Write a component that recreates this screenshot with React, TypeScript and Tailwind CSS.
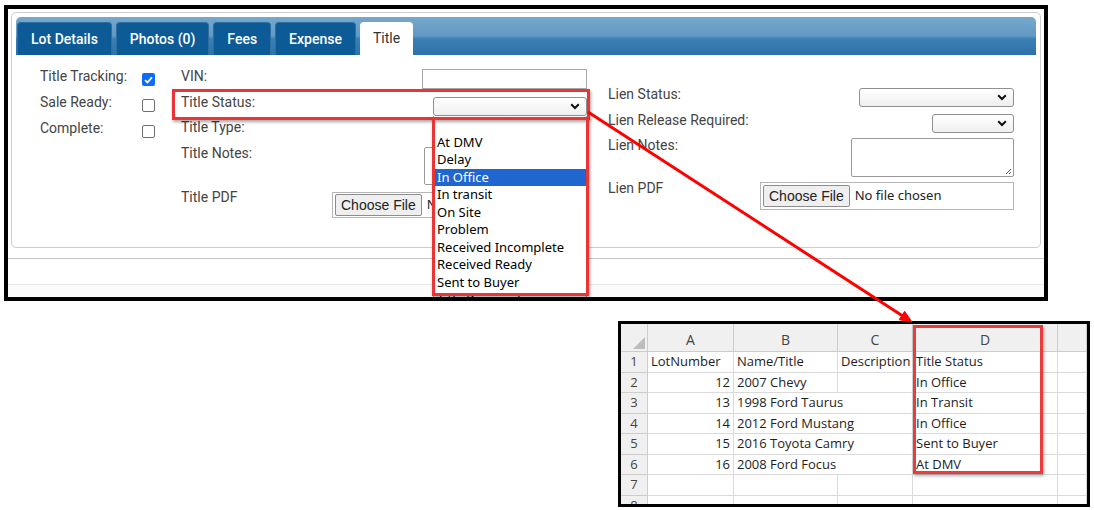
import React from "react";

const Chevron = () => (
  <svg width="10" height="7" viewBox="0 0 10 7" className="shrink-0">
    <path d="M1.2 1.2 5 5 8.8 1.2" fill="none" stroke="#111" strokeWidth="2" />
  </svg>
);

const Select = ({ cls }: { cls: string }) => (
  <div
    className={`${cls} h-[19px] flex items-center justify-end pr-[6px] border border-[#8f8f8f] rounded-[3px] bg-[linear-gradient(to_bottom,#ffffff,#efefef)]`}
  >
    <Chevron />
  </div>
);

const Check = ({ on }: { on?: boolean }) =>
  on ? (
    <div className="w-[13px] h-[13px] rounded-[2px] bg-[#0b6cf5] flex items-center justify-center">
      <svg width="9" height="8" viewBox="0 0 9 8">
        <path d="M1 4.2 3.4 6.5 8 1.3" fill="none" stroke="#fff" strokeWidth="1.8" />
      </svg>
    </div>
  ) : (
    <div className="w-[13px] h-[13px] rounded-[2px] border border-[#6f6f6f] bg-white" />
  );

const FileInput = ({ cls }: { cls: string }) => (
  <div
    className={`${cls} border border-[#b5b5b5] flex items-center px-[2px] gap-[5px] bg-white overflow-hidden whitespace-nowrap`}
  >
    <div className="h-[22px] px-[5px] flex items-center border border-[#8d8d8d] rounded-[2px] bg-[#efefef] font-['Liberation_Sans',Arial,sans-serif] text-[14px] text-[#222]">
      Choose File
    </div>
    <span className="font-['Noto_Sans',sans-serif] text-[13px] text-[#222]">No file chosen</span>
  </div>
);

const TextArea = ({ cls }: { cls: string }) => (
  <div className={`${cls} relative border border-[#9a9a9a] rounded-[2px] bg-white`}>
    <svg className="absolute right-[1px] bottom-[1px]" width="8" height="8" viewBox="0 0 8 8">
      <path d="M7 2 2 7 M7 5 5 7" stroke="#555" strokeWidth="1" />
    </svg>
  </div>
);

const Label = ({ text, lh }: { text: string; lh: string }) => (
  <div className={`text-[14px] text-[#444] whitespace-nowrap ${lh}`}>{text}</div>
);

const tabs = ["Lot Details", "Photos (0)", "Fees", "Expense"];

const options = [
  "",
  "At DMV",
  "Delay",
  "In Office",
  "In transit",
  "On Site",
  "Problem",
  "Received Incomplete",
  "Received Ready",
  "Sent to Buyer",
  "Title Received",
];

const rows: { n: string; a: string; b: string; c: string; d: string; span?: boolean }[] = [
  { n: "1", a: "LotNumber", b: "Name/Title", c: "Description", d: "Title Status" },
  { n: "2", a: "12", b: "2007 Chevy", c: "", d: "In Office" },
  { n: "3", a: "13", b: "1998 Ford Taurus", c: "", d: "In Transit", span: true },
  { n: "4", a: "14", b: "2012 Ford Mustang", c: "", d: "In Office", span: true },
  { n: "5", a: "15", b: "2016 Toyota Camry", c: "", d: "Sent to Buyer", span: true },
  { n: "6", a: "16", b: "2008 Ford Focus", c: "", d: "At DMV", span: true },
  { n: "7", a: "", b: "", c: "", d: "" },
  { n: "8", a: "", b: "", c: "", d: "" },
];

const cell = "border-r border-b border-[#dadada] px-[3px] flex items-center whitespace-nowrap text-[#1d1d1d]";
const head = "bg-[#f0f0f0] border-r border-b border-[#cdcdcd] flex items-center justify-center text-[#444]";

export default function App() {
  return (
    <div className="relative w-[1094px] h-[510px] bg-white overflow-hidden font-['Roboto',sans-serif]">
      {/* top screenshot */}
      <div className="ml-[4px] mt-[5px] w-[1044px] h-[296px] border-4 border-black bg-white flex flex-col">
        <div className="ml-[3px] mt-[3px] w-[1030px] h-[236px] shrink-0 border border-[#cdcdcd] rounded-[5px] pt-[4px] pl-[4px]">
          <div className="w-[1020px] h-[38px] rounded-t-[5px] bg-[linear-gradient(to_bottom,#77a8cc_0%,#6199c3_50%,#3b80b5_57%,#2c71a9_100%)] flex items-end gap-[4px] pl-[1px]">
            {tabs.map((t) => (
              <div
                key={t}
                className="h-[33px] px-[13px] flex items-center rounded-t-[4px] bg-[#0c5a96] border border-b-0 border-[#2f6f9f] text-white text-[14px] font-medium"
              >
                {t}
              </div>
            ))}
            <div className="h-[33px] px-[13px] flex items-center rounded-t-[4px] bg-white text-[#333] text-[14px]">
              Title
            </div>
          </div>

          <div className="flex pl-[24px]">
            <div className="w-[141px] pt-[8px] flex flex-col">
              {[
                ["Title Tracking:", true],
                ["Sale Ready:", false],
                ["Complete:", false],
              ].map(([t, on]) => (
                <div key={t as string} className="h-[26px] flex items-start">
                  <div className="w-[102px]">
                    <Label text={t as string} lh="leading-[26px]" />
                  </div>
                  <div className="mt-[10px]">
                    <Check on={on as boolean} />
                  </div>
                </div>
              ))}
            </div>

            <div className="w-[406px] pt-[8px] flex flex-col">
              <div className="h-[26px] flex justify-between items-start">
                <Label text="VIN:" lh="leading-[26px]" />
                <div className="mt-[6px] w-[165px] h-[20px] border border-[#a8a8a8] bg-white" />
              </div>
              <div className="h-[26px] flex justify-between items-start">
                <Label text="Title Status:" lh="leading-[26px]" />
                <div className="mt-[8px]">
                  <Select cls="w-[154px]" />
                </div>
              </div>
              <div className="h-[25px] flex items-start">
                <Label text="Title Type:" lh="leading-[25px]" />
              </div>
              <div className="h-[45px] flex justify-between items-start">
                <Label text="Title Notes:" lh="leading-[26px]" />
                <div className="mt-[7px]">
                  <TextArea cls="w-[163px] h-[38px]" />
                </div>
              </div>
              <div className="flex justify-between items-start">
                <Label text="Title PDF" lh="leading-[24px]" />
                <div className="mt-[7px]">
                  <FileInput cls="w-[255px] h-[26px]" />
                </div>
              </div>
            </div>

            <div className="w-[406px] ml-[21px] pt-[26px] flex flex-col">
              <div className="h-[26px] flex justify-between items-start">
                <Label text="Lien Status:" lh="leading-[26px]" />
                <div className="mt-[7px]">
                  <Select cls="w-[155px]" />
                </div>
              </div>
              <div className="h-[26px] flex justify-between items-start">
                <Label text="Lien Release Required:" lh="leading-[26px]" />
                <div className="mt-[7px]">
                  <Select cls="w-[82px]" />
                </div>
              </div>
              <div className="h-[44px] flex justify-between items-start">
                <Label text="Lien Notes:" lh="leading-[24px]" />
                <div className="mt-[5px]">
                  <TextArea cls="w-[163px] h-[39px]" />
                </div>
              </div>
              <div className="flex justify-between items-start">
                <Label text="Lien PDF" lh="leading-[22px]" />
                <div className="mt-[5px]">
                  <FileInput cls="w-[254px] h-[28px]" />
                </div>
              </div>
            </div>
          </div>
        </div>
        <div className="mt-[10px] h-[26px] shrink-0 border-t border-[#c6c6c6]" />
        <div className="flex-1 border-t border-[#e6e6e6] bg-[#fbfbfb]" />
      </div>

      {/* spreadsheet screenshot */}
      <div className="ml-[618px] mt-[20px] w-[472px] h-[186px] border-[3px] border-black overflow-hidden bg-white font-['Open_Sans',sans-serif] text-[13px]">
        <div className="grid grid-cols-[27px_86px_104px_75px_145px_1fr] grid-rows-[28px] auto-rows-[20.5px]">
          <div className={`${head} relative`}>
            <svg className="absolute right-[2px] bottom-[2px]" width="12" height="12" viewBox="0 0 12 12">
              <polygon points="12,0 12,12 0,12" fill="#bdbdbd" />
            </svg>
          </div>
          {["A", "B", "C", "D", ""].map((l, i) => (
            <div key={i} className={`${head} pt-[3px] text-[14px]`}>
              {l}
            </div>
          ))}
          {rows.map((r) => (
            <React.Fragment key={r.n}>
              <div className={`${head} text-[13px]`}>{r.n}</div>
              <div className={`${cell} ${r.n === "1" ? "" : "justify-end"} px-[2px]`}>{r.a}</div>
              {r.span ? (
                <div className={`${cell} col-span-2`}>{r.b}</div>
              ) : (
                <>
                  <div className={cell}>{r.b}</div>
                  <div className={cell}>{r.c}</div>
                </>
              )}
              <div className={cell}>{r.d}</div>
              <div className={cell} />
            </React.Fragment>
          ))}
        </div>
      </div>

      {/* open dropdown list */}
      <div className="absolute left-[433px] top-[116px] w-[154px] h-[181px] overflow-hidden bg-white border-x border-[#9a9a9a] font-['Noto_Sans',sans-serif] text-[13px] text-black">
        {options.map((o, i) => (
          <div
            key={i}
            className={`h-[17.5px] leading-[17.5px] pl-[3px] whitespace-nowrap ${
              o === "In Office" ? "bg-[#1f66d1] text-white" : ""
            }`}
          >
            {o}
          </div>
        ))}
      </div>

      {/* annotations */}
      <div className="absolute left-[172px] top-[89px] w-[418px] h-[31px] border-[3px] border-[#ec3434] shadow-[1px_2px_3px_rgba(0,0,0,0.35)] pointer-events-none" />
      <div className="absolute left-[432px] top-[117px] w-[157px] h-[179px] border-[3px] border-[#ec3434] shadow-[1px_2px_3px_rgba(0,0,0,0.35)] pointer-events-none" />
      <div className="absolute left-[913px] top-[325px] w-[130px] h-[149px] border-[3px] border-[#ec3b3b] shadow-[1px_2px_3px_rgba(0,0,0,0.3)] pointer-events-none" />
      <svg className="absolute left-0 top-0 pointer-events-none" width="1094" height="510" viewBox="0 0 1094 510">
        <line x1="588" y1="112" x2="902" y2="315.5" stroke="#ff0000" strokeWidth="3" />
        <polygon points="912,322 899.2,319.7 904.6,311.3" fill="#ff0000" stroke="#ff0000" strokeWidth="1" />
      </svg>
    </div>
  );
}
